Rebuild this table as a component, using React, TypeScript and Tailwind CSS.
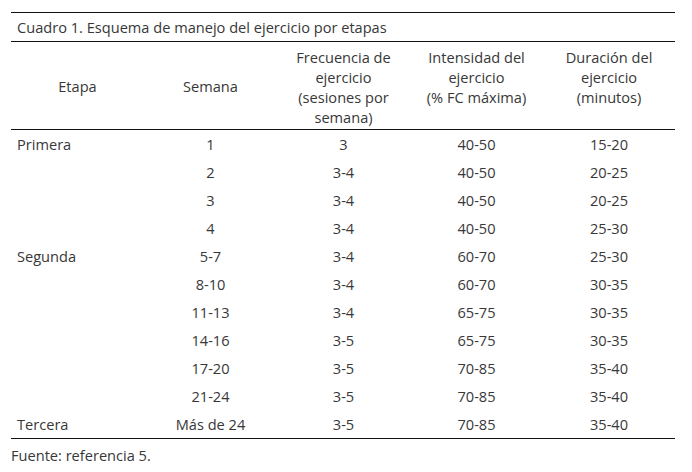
import React from 'react';

const rows: [string, string, string, string, string][] = [
  ['Primera', '1', '3', '40-50', '15-20'],
  ['', '2', '3-4', '40-50', '20-25'],
  ['', '3', '3-4', '40-50', '20-25'],
  ['', '4', '3-4', '40-50', '25-30'],
  ['Segunda', '5-7', '3-4', '60-70', '25-30'],
  ['', '8-10', '3-4', '60-70', '30-35'],
  ['', '11-13', '3-4', '65-75', '30-35'],
  ['', '14-16', '3-5', '65-75', '30-35'],
  ['', '17-20', '3-5', '70-85', '35-40'],
  ['', '21-24', '3-5', '70-85', '35-40'],
  ['Tercera', 'Más de 24', '3-5', '70-85', '35-40'],
];

export default function App() {
  return (
    <div
      className="w-[692px] h-[472px] bg-white pl-[11px] pt-[12px] text-[#383838] text-[14.6px] leading-[20px]"
      style={{ fontFamily: '"Open Sans", "Noto Sans", sans-serif' }}
    >
      <table className="w-[664px] table-fixed border-collapse">
        <colgroup>
          <col className="w-[133px]" />
          <col className="w-[133px]" />
          <col className="w-[133px]" />
          <col className="w-[133px]" />
          <col className="w-[132px]" />
        </colgroup>
        <thead>
          <tr className="border-t border-b border-[#111]">
            <th colSpan={5} className="h-[28px] px-[6px] py-[4px] text-left font-normal">
              Cuadro 1. Esquema de manejo del ejercicio por etapas
            </th>
          </tr>
          <tr className="border-b border-[#111]">
            <th className="h-[87px] px-[6px] align-middle font-normal text-center">Etapa</th>
            <th className="px-[6px] align-middle font-normal text-center">Semana</th>
            <th className="px-[2px] pt-[5px] pb-[2px] align-top font-normal text-center">
              Frecuencia de
              <br />
              ejercicio
              <br />
              (sesiones por
              <br />
              semana)
            </th>
            <th className="px-[2px] pt-[5px] pb-[2px] align-top font-normal text-center">
              Intensidad del
              <br />
              ejercicio
              <br />
              (% FC máxima)
            </th>
            <th className="px-[2px] pt-[5px] pb-[2px] align-top font-normal text-center">
              Duración del
              <br />
              ejercicio
              <br />
              (minutos)
            </th>
          </tr>
        </thead>
        <tbody className="border-b border-[#111]">
          {rows.map((r, i) => (
            <tr key={i} className="h-[28px]">
              <td className="px-[6px] py-[4px] text-left">{r[0]}</td>
              <td className="px-[6px] py-[4px] text-center">{r[1]}</td>
              <td className="px-[6px] py-[4px] text-center">{r[2]}</td>
              <td className="px-[6px] py-[4px] text-center">{r[3]}</td>
              <td className="px-[6px] py-[4px] text-center">{r[4]}</td>
            </tr>
          ))}
        </tbody>
      </table>
      <p className="mt-[6px]">Fuente: referencia 5.</p>
    </div>
  );
}
